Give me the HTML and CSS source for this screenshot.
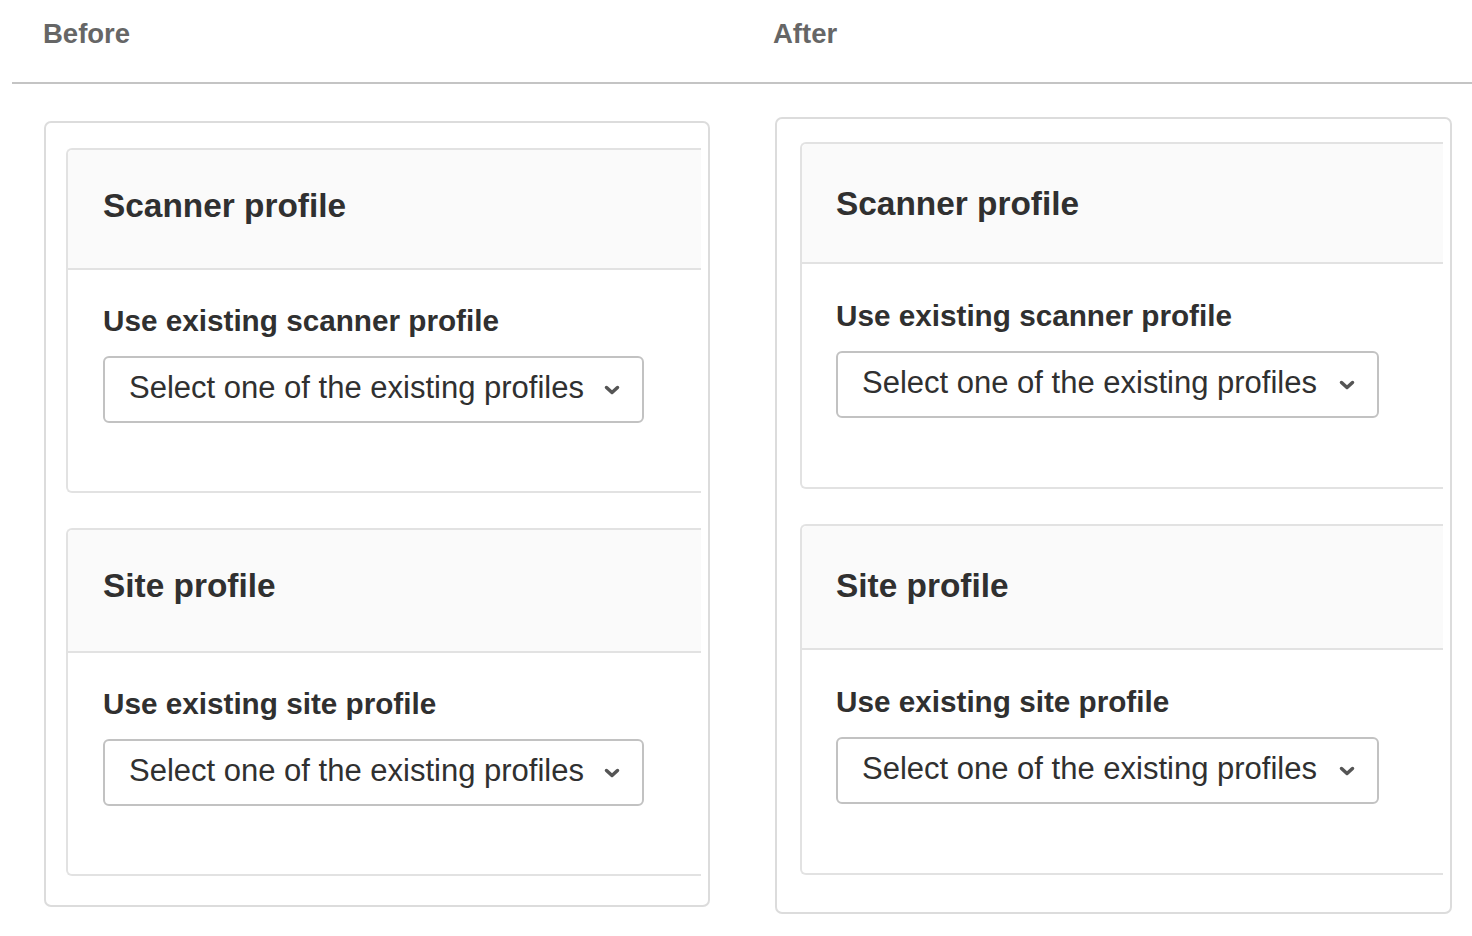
FILE: index.html
```html
<!DOCTYPE HTML>
<html>

<head>
  <meta charset="utf-8">
  <link rel="stylesheet" href="styles.css">
</head>

<body>
  <div class="tabs">
    <div class="tab tab-before">Before</div>
    <div class="tab">After</div>
  </div>

  <div class="compare">
    <div class="panel panel-before">
      <div class="card">
        <div class="card-header">Scanner profile</div>
        <div class="card-body">
          <div class="label">Use existing scanner profile</div>
          <div class="select">
            <span>Select one of the existing profiles</span>
            <svg class="chevron" width="16" height="10" viewBox="0 0 16 10">
              <polyline points="2.5,2.5 8,7.5 13.5,2.5" />
            </svg>
          </div>
        </div>
      </div>
      <div class="card card-site">
        <div class="card-header">Site profile</div>
        <div class="card-body">
          <div class="label">Use existing site profile</div>
          <div class="select">
            <span>Select one of the existing profiles</span>
            <svg class="chevron" width="16" height="10" viewBox="0 0 16 10">
              <polyline points="2.5,2.5 8,7.5 13.5,2.5" />
            </svg>
          </div>
        </div>
      </div>
    </div>

    <div class="panel panel-after">
      <div class="card">
        <div class="card-header">Scanner profile</div>
        <div class="card-body">
          <div class="label">Use existing scanner profile</div>
          <div class="select">
            <span>Select one of the existing profiles</span>
            <svg class="chevron" width="16" height="10" viewBox="0 0 16 10">
              <polyline points="2.5,2.5 8,7.5 13.5,2.5" />
            </svg>
          </div>
        </div>
      </div>
      <div class="card card-site">
        <div class="card-header">Site profile</div>
        <div class="card-body">
          <div class="label">Use existing site profile</div>
          <div class="select">
            <span>Select one of the existing profiles</span>
            <svg class="chevron" width="16" height="10" viewBox="0 0 16 10">
              <polyline points="2.5,2.5 8,7.5 13.5,2.5" />
            </svg>
          </div>
        </div>
      </div>
    </div>
  </div>
</body>

</html>
```

FILE: styles.css
```css
body {
    margin: 0;
    background: #fff;
    font-family: "Liberation Sans", Arial, sans-serif;
    color: #303030;
}

.tabs {
    display: flex;
    margin-left: 12px;
    padding: 18px 0 32px 31px;
    border-bottom: 2px solid #c4c4c4;
}
.tab {
    font-size: 27.5px;
    line-height: 32px;
    font-weight: bold;
    color: #666;
}
.tab-before {
    width: 730px;
}

.compare {
    display: flex;
    align-items: flex-start;
    gap: 65px;
    padding: 33px 0 0 44px;
}

.panel {
    display: flex;
    flex-direction: column;
    gap: 35px;
    box-sizing: border-box;
    border: 2px solid #dcdcdc;
    border-radius: 7px;
}
.panel-before {
    width: 666px;
    margin-top: 4px;
    padding: 25px 7px 29px 20px;
}
.panel-after {
    width: 677px;
    padding: 23px 7px 37px 23px;
}

.card {
    border: 2px solid #e2e2e2;
    border-right: none;
    border-radius: 6px 0 0 6px;
}
.card-header {
    background: #fafafa;
    border-bottom: 2px solid #e2e2e2;
    border-radius: 5px 0 0 0;
    padding: 36px 35px 42px;
    font-size: 33.4px;
    line-height: 40px;
    font-weight: bold;
}
.card-site .card-header {
    padding-bottom: 45px;
}
.panel-after .card-header {
    padding: 40px 35px 38px 34px;
}
.panel-after .card-site .card-header {
    padding-bottom: 42px;
}
.card-body {
    padding: 33px 35px 68px;
}
.panel-after .card-body {
    padding: 34px 34px 69px;
}

.label {
    font-size: 29.7px;
    line-height: 36px;
    font-weight: bold;
    margin-bottom: 17px;
}

.select {
    display: flex;
    align-items: center;
    justify-content: space-between;
    box-sizing: border-box;
    width: 541px;
    height: 67px;
    padding: 0 22px 4px 24px;
    border: 2px solid #c2c2c2;
    border-radius: 6px;
    font-size: 31px;
    line-height: 36px;
}
.panel-after .select {
    width: 543px;
}

.chevron {
    margin-top: 4px;
}
.chevron polyline {
    fill: none;
    stroke: #555;
    stroke-width: 3.5;
    stroke-linecap: round;
    stroke-linejoin: round;
}
```
